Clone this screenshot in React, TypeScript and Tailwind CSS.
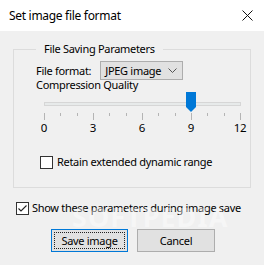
import * as React from "react";

const ticks = Array.from({ length: 13 }, (_, i) => i);
const labels = [0, 3, 6, 9, 12];

function Checkbox({ checked }: { checked?: boolean }) {
  return (
    <span className="flex h-[13px] w-[13px] shrink-0 items-center justify-center border border-[#333333] bg-white">
      {checked && (
        <svg width="11" height="11" viewBox="0 0 11 11">
          <path d="M1.5 5.5 L4 8 L9.5 2.5" fill="none" stroke="#222222" strokeWidth="1.1" />
        </svg>
      )}
    </span>
  );
}

function Slider({ value }: { value: number }) {
  const step = 196 / 12;
  const thumbX = value * step;
  return (
    <div className="relative ml-[8px] h-[46px] w-[197px]">
      <svg className="absolute left-0 top-0" width="197" height="30" viewBox="0 0 197 30">
        <rect x="0.5" y="10.5" width="196" height="3" fill="#e7eaea" stroke="#d6d6d6" />
        {ticks.map((i) => {
          const x = Math.round(i * step) + 0.5;
          const major = i % 3 === 0;
          return (
            <line key={i} x1={x} x2={x} y1={21} y2={major ? 28 : 24} stroke="#b4b4b4" />
          );
        })}
        <path
          d={`M${thumbX - 5} 0 H${thumbX + 5} V15 L${thumbX} 20 L${thumbX - 5} 15 Z`}
          fill="#0078d7"
        />
      </svg>
      {labels.map((l) => (
        <span
          key={l}
          className="absolute top-[28px] -translate-x-1/2 text-[11.5px] leading-[16px]"
          style={{ left: l * step }}
        >
          {l}
        </span>
      ))}
    </div>
  );
}

export default function App() {
  return (
    <div
      className="relative flex h-[265px] w-[264px] flex-col overflow-hidden whitespace-nowrap bg-[#f0f0f0] text-[11px] leading-[16px] tracking-[-0.3px] text-black"
      style={{ fontFamily: '"Noto Sans", "Open Sans", sans-serif' }}
    >
      <div className="flex h-[31px] shrink-0 items-center justify-between bg-white pl-[9px] pr-[11px]">
        <span className="text-[12px] tracking-[-0.3px]">Set image file format</span>
        <svg width="11" height="11" viewBox="0 0 11 11">
          <path d="M0.5 0.5 L10.5 10.5 M10.5 0.5 L0.5 10.5" stroke="#111111" strokeWidth="1" />
        </svg>
      </div>

      <fieldset className="mx-[13px] mt-[10px] h-[147px] shrink-0 border border-[#dcdcdc] pl-[22px]">
        <legend className="px-[8px] leading-[16px]">File Saving Parameters</legend>
        <div className="mt-[4px] flex items-center gap-[9px]">
          <span>File format:</span>
          <div className="flex h-[19px] w-[83px] items-center justify-between border border-[#adadad] bg-[#e1e1e1] pl-[4px] pr-[5px]">
            <span>JPEG image</span>
            <svg width="9" height="6" viewBox="0 0 9 6">
              <path d="M0.5 0.5 L4.5 4.5 L8.5 0.5" fill="none" stroke="#555555" strokeWidth="1" />
            </svg>
          </div>
        </div>
        <div className="mt-[-3px]">Compression Quality</div>
        <div className="mt-[-1px]">
          <Slider value={9} />
        </div>
        <label className="ml-[4px] mt-[16px] flex items-center gap-[4px]">
          <Checkbox />
          <span>Retain extended dynamic range</span>
        </label>
      </fieldset>

      <label className="ml-[16px] mt-[12px] flex items-center gap-[3px]">
        <Checkbox checked />
        <span>Show these parameters during image save</span>
      </label>

      <div className="ml-[51px] mt-[13px] flex gap-[9px]">
        <button className="flex h-[23px] w-[77px] items-center justify-center border border-[#0078d7] bg-[#e1e1e1] p-[2px]">
          <span className="flex h-full w-full items-center justify-center border border-dotted border-[#222222]">
            Save image
          </span>
        </button>
        <button className="flex h-[23px] w-[78px] items-center justify-center border border-[#adadad] bg-[#e1e1e1]">
          Cancel
        </button>
      </div>

      <span className="pointer-events-none absolute left-[72px] top-[209px] text-[27px] font-bold tracking-[1px] text-white opacity-40">
        SOFTPEDIA
      </span>
    </div>
  );
}
